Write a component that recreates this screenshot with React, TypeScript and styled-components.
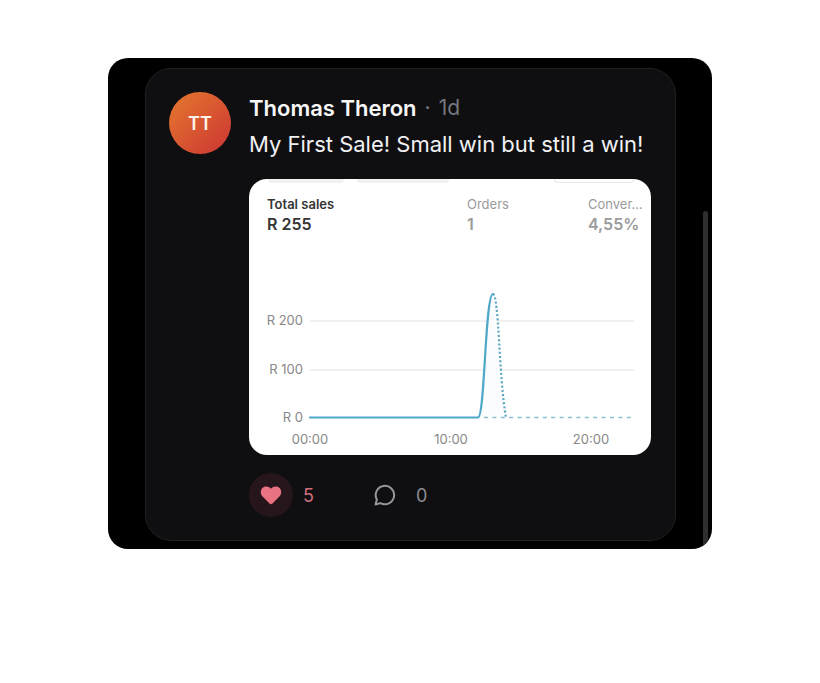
import React from 'react';
import styled, { createGlobalStyle } from 'styled-components';

const GlobalStyle = createGlobalStyle`
  * {
    box-sizing: border-box;
  }

  body {
    margin: 0;
    background: #ffffff;
    font-family: Inter, "Liberation Sans", sans-serif;
  }
`;

const Page = styled.main`
  padding: 58px 108px;
`;

const Frame = styled.div`
  position: relative;
  padding: 10px 36px 8px 37px;
  border-radius: 20px;
  background: #000000;
  overflow: hidden;
`;

const ScrollThumb = styled.div`
  position: absolute;
  top: 153px;
  right: 4px;
  bottom: 0;
  width: 5px;
  border-radius: 3px 3px 0 0;
  background: #302f2f;
`;

const Post = styled.article`
  display: flex;
  align-items: flex-start;
  gap: 18px;
  padding: 23px 24px 23px 23px;
  border: 1px solid #202023;
  border-radius: 26px;
  background: #0f0f11;
`;

const Avatar = styled.div`
  flex: none;
  display: flex;
  align-items: center;
  justify-content: center;
  width: 62px;
  height: 62px;
  border-radius: 50%;
  background: linear-gradient(135deg, #e5792d 0%, #ce3b33 90%);
  color: #fff4ec;
  font-size: 18px;
  font-weight: 600;
`;

const PostBody = styled.div`
  flex: 1;
  min-width: 0;
`;

const PostHeader = styled.header`
  display: flex;
  align-items: center;
  line-height: 32px;
`;

const Author = styled.h2`
  margin: 0;
  color: #f8f8f9;
  font-size: 22px;
  font-weight: 600;
`;

const Muted = styled.span`
  margin-left: 8px;
  color: #77777d;
  font-size: 21px;
`;

const Message = styled.p`
  margin: 5px 0 20px;
  color: #f1f1f3;
  font-size: 22px;
  line-height: 30px;
  white-space: nowrap;
`;

const Report = styled.section`
  border-radius: 18px;
  background: #ffffff;
  overflow: hidden;
`;

const Filters = styled.div`
  display: flex;
  height: 4px;
  padding: 0 17px 0 19px;
  gap: 13px;
`;

const FilterEdge = styled.div<{ $width: number; $outlined?: boolean }>`
  width: ${({ $width }) => $width}px;
  border-radius: 0 0 8px 8px;
  background: ${({ $outlined }) => ($outlined ? '#ffffff' : '#f1f1f1')};
  border: ${({ $outlined }) => ($outlined ? '1px solid #e6e6e6' : 'none')};
  border-top: none;
  margin-left: ${({ $outlined }) => ($outlined ? 'auto' : '0')};
`;

const Metrics = styled.dl`
  display: grid;
  grid-template-columns: 200fr 121fr 63fr;
  margin: 0;
  padding: 12px 0 0 18px;
`;

const Metric = styled.div<{ $active?: boolean }>`
  color: ${({ $active }) => ($active ? '#353535' : '#9b9b9b')};
  font-weight: ${({ $active }) => ($active ? 600 : 400)};
  white-space: nowrap;
`;

const MetricLabel = styled.dt`
  font-size: 13px;
  line-height: 19px;
`;

const MetricValue = styled.dd`
  margin: 0;
  font-size: 16px;
  font-weight: 600;
  line-height: 20px;
`;

const Chart = styled.svg`
  display: block;
  width: 100%;
  height: auto;

  text {
    fill: #878787;
    font-size: 13px;
  }
`;

const Actions = styled.footer`
  display: flex;
  align-items: center;
  gap: 60px;
  margin-top: 18px;
`;

const ActionButton = styled.button<{ $color: string; $gap: number }>`
  display: flex;
  align-items: center;
  gap: ${({ $gap }) => $gap}px;
  padding: 0;
  border: none;
  background: none;
  color: ${({ $color }) => $color};
  font-family: inherit;
  font-size: 18px;
  cursor: pointer;
`;

const IconCircle = styled.span`
  display: flex;
  align-items: center;
  justify-content: center;
  width: 44px;
  height: 44px;
  border-radius: 50%;
  background: #26151b;
`;

const HeartIcon = () => (
  <svg width="22" height="22" viewBox="0 0 22 22" aria-hidden="true">
    <path
      d="M11 20.2 C10.4 20.2 10 19.9 9.5 19.4 L2.8 12.8 C1.4 11.4 0.8 9.9 0.8 8 C0.8 4.8 3 2.4 6.1 2.4 C8.1 2.4 9.7 3.2 11 4.7 C12.3 3.2 13.9 2.4 15.9 2.4 C19 2.4 21.2 4.8 21.2 8 C21.2 9.9 20.6 11.4 19.2 12.8 L12.5 19.4 C12 19.9 11.6 20.2 11 20.2 Z"
      fill="#ea7381"
    />
  </svg>
);

const CommentIcon = () => (
  <svg width="22" height="22" viewBox="0 0 22 22" fill="none" aria-hidden="true">
    <path
      d="M6.4 19.1 A9.2 9.2 0 1 0 2.9 15.6 L1.5 20.5 Z"
      stroke="#96969b"
      strokeWidth="2"
      strokeLinejoin="round"
    />
  </svg>
);

const metrics = [
  { label: 'Total sales', value: 'R 255', active: true },
  { label: 'Orders', value: '1' },
  { label: 'Conver...', value: '4,55%' },
];

const yTicks = [
  { label: 'R 200', y: 80 },
  { label: 'R 100', y: 129 },
  { label: 'R 0', y: 177 },
];

const xTicks = [
  { label: '00:00', x: 61 },
  { label: '10:00', x: 202 },
  { label: '20:00', x: 342 },
];

const SalesChart = () => (
  <Chart viewBox="0 0 402 221" role="img" aria-label="Total sales by hour">
    <g transform="translate(0 6)">
      {yTicks.map(({ label, y }) => (
        <React.Fragment key={label}>
          {label !== 'R 0' && <path d={`M61 ${y + 1}H385`} stroke="#ebebeb" strokeWidth="1.5" />}
          <text x="54" y={y + 5} textAnchor="end">{label}</text>
        </React.Fragment>
      ))}
      {xTicks.map(({ label, x }) => (
        <text key={label} x={x} y="204" textAnchor="middle">{label}</text>
      ))}
      <path
        d="M230 177.5 C236 176 236 54 244 54 C250 54 250 160 257 177.5 Z"
        fill="#fafcfd"
      />
      <path d="M235 177.5H385" stroke="#8dbdd1" strokeWidth="1.6" strokeDasharray="4 4.4" />
      <path
        d="M244 54 C250 54 250 140 257 177.5"
        fill="none"
        stroke="#5ba6bf"
        strokeWidth="2.2"
        strokeDasharray="2 2.2"
      />
      <path
        d="M61 177.5 H229 C236 177.5 236 54 244 54"
        fill="none"
        stroke="#4fa8c7"
        strokeWidth="2.2"
        strokeLinecap="round"
      />
    </g>
  </Chart>
);

const App: React.FC = () => {
  return (
    <>
      <GlobalStyle />
      <Page>
        <Frame>
          <Post>
            <Avatar>TT</Avatar>
            <PostBody>
              <PostHeader>
                <Author>Thomas Theron</Author>
                <Muted>·</Muted>
                <Muted>1d</Muted>
              </PostHeader>
              <Message>My First Sale! Small win but still a win!</Message>
              <Report>
                <Filters>
                  <FilterEdge $width={76} />
                  <FilterEdge $width={92} />
                  <FilterEdge $width={80} $outlined />
                </Filters>
                <Metrics>
                  {metrics.map(({ label, value, active }) => (
                    <Metric key={label} $active={active}>
                      <MetricLabel>{label}</MetricLabel>
                      <MetricValue>{value}</MetricValue>
                    </Metric>
                  ))}
                </Metrics>
                <SalesChart />
              </Report>
              <Actions>
                <ActionButton type="button" aria-label="Like, 5" $color="#d06f7c" $gap={10}>
                  <IconCircle>
                    <HeartIcon />
                  </IconCircle>
                  5
                </ActionButton>
                <ActionButton type="button" aria-label="Comments, 0" $color="#8c8c91" $gap={20}>
                  <CommentIcon />
                  0
                </ActionButton>
              </Actions>
            </PostBody>
          </Post>
          <ScrollThumb />
        </Frame>
      </Page>
    </>
  );
};

export default App;
